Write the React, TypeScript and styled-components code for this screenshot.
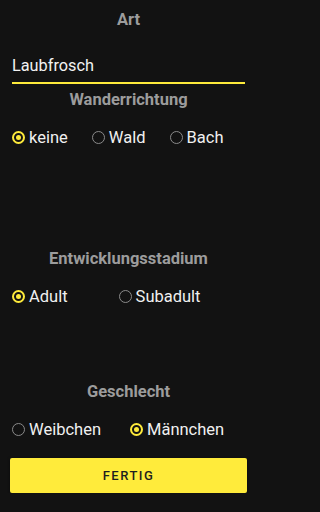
import React, { useState } from 'react'
import styled, { createGlobalStyle } from 'styled-components'

const GlobalStyle = createGlobalStyle`
  body {
    margin: 0;
    background: #121212;
    font-family: Roboto, 'Liberation Sans', sans-serif;
  }
`

type Group = {
  title: string
  options: string[]
  gap: number
  marginTop: number
}

const groups: Group[] = [
  { title: 'Wanderrichtung', options: ['keine', 'Wald', 'Bach'], gap: 24, marginTop: 6 },
  { title: 'Entwicklungsstadium', options: ['Adult', 'Subadult'], gap: 51, marginTop: 100 },
  { title: 'Geschlecht', options: ['Weibchen', 'Männchen'], gap: 29, marginTop: 74 },
]

export default function App() {
  const [species, setSpecies] = useState('Laubfrosch')
  const [picked, setPicked] = useState<Record<string, string>>({
    Wanderrichtung: 'keine',
    Entwicklungsstadium: 'Adult',
    Geschlecht: 'Männchen',
  })

  return (
    <>
      <GlobalStyle />
      <Page>
        <Heading $top={10}>Art</Heading>
        <SpeciesInput autoFocus value={species} onChange={e => setSpecies(e.target.value)} />
        {groups.map(group => (
          <React.Fragment key={group.title}>
            <Heading $top={group.marginTop}>{group.title}</Heading>
            <RadioRow $gap={group.gap}>
              {group.options.map(option => (
                <RadioLabel key={option}>
                  <RadioInput
                    type='radio'
                    name={group.title}
                    checked={picked[group.title] === option}
                    onChange={() => setPicked({ ...picked, [group.title]: option })}
                  />
                  {option}
                </RadioLabel>
              ))}
            </RadioRow>
          </React.Fragment>
        ))}
        <DoneButton type='button'>Fertig</DoneButton>
      </Page>
    </>
  )
}

const Page = styled.div`
  display: flex;
  flex-direction: column;
  box-sizing: border-box;
  width: 256px;
  padding: 0 9px 0 10px;
`

const Heading = styled.div<{ $top: number }>`
  margin-top: ${p => p.$top}px;
  height: 20px;
  line-height: 20px;
  text-align: center;
  font-size: 16.5px;
  font-weight: 700;
  color: #9c9c9c;
`

const SpeciesInput = styled.input`
  margin: 25px 2px 0 2px;
  padding: 0 0 7px 0;
  height: 20px;
  background: none;
  border: none;
  border-bottom: 2px solid #fdea3b;
  outline: none;
  font-family: inherit;
  font-size: 16.3px;
  color: #f2f2f2;
  caret-color: #fdea3b;
`

const RadioRow = styled.div<{ $gap: number }>`
  display: flex;
  align-items: center;
  gap: ${p => p.$gap}px;
  margin-top: 15px;
  padding-left: 2px;
  height: 24px;
`

const RadioLabel = styled.label`
  display: flex;
  align-items: center;
  gap: 4px;
  font-size: 16.5px;
  color: #f0f0f0;
`

const RadioInput = styled.input`
  appearance: none;
  margin: 0;
  width: 13px;
  height: 13px;
  border-radius: 50%;
  border: 1.5px solid #8a8a8a;
  box-sizing: border-box;
  display: grid;
  place-items: center;

  &:checked {
    border: 2px solid #fdea3b;
  }
  &:checked::after {
    content: '';
    width: 5px;
    height: 5px;
    border-radius: 50%;
    background: #fdea3b;
  }
`

const DoneButton = styled.button`
  margin-top: 17px;
  height: 35px;
  border: none;
  border-radius: 2px;
  background: #ffeb3b;
  box-shadow: 0 1px 3px rgba(0, 0, 0, 0.6);
  font-family: inherit;
  font-size: 13px;
  font-weight: 500;
  letter-spacing: 1.5px;
  text-transform: uppercase;
  color: #1e1e1e;
`
